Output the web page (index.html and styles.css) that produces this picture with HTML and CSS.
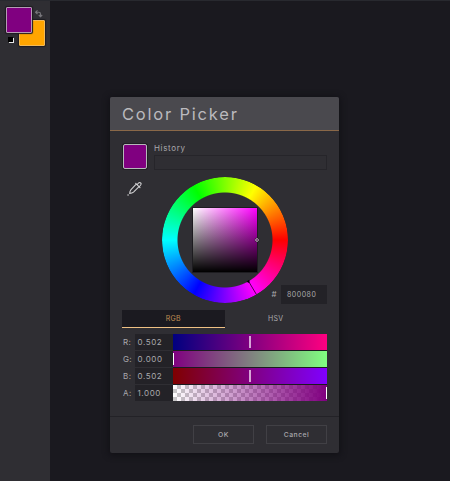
FILE: index.html
```html
<!DOCTYPE html>
<html lang="en">
<head>
<meta charset="utf-8">
<title>Color Picker</title>
<link rel="stylesheet" href="styles.css">
</head>
<body>
<div class="app">
  <aside class="toolbar">
    <div class="swatches">
      <div class="back-color"></div>
      <div class="fore-color"></div>
      <svg class="swap" width="8" height="8" viewBox="0 0 8 8"><path d="M2.5.4.5 2.2l2 1.8M.7 2.2h3.2Q5.5 2.2 5.5 4v2.5M3.8 5l1.7 1.8L7.2 5" /></svg>
      <div class="reset"><i></i></div>
    </div>
  </aside>
  <main class="workspace">
    <section class="dialog">
      <header class="title">Color Picker</header>
      <div class="content">
        <div class="top">
          <div class="current"></div>
          <div class="history">
            <div class="history-label">History</div>
            <div class="history-list"></div>
          </div>
        </div>
        <div class="picker">
          <svg class="dropper" width="16" height="16" viewBox="0 0 16 16">
            <path d="M9.2 3.2 4 8.6C3 9.8 2.7 11.2 2.7 12.4c1.2 0 2.7-.3 3.8-1.3l5.3-5.2M8.7 2.3l4.3 4.3M10.3 3.4l1.3-1.4c1.5-1.3 3.4.6 2.1 2L12.4 5.5" />
            <path class="tip" d="M1 14h.1" />
          </svg>
          <div class="wheel">
            <div class="ring"></div>
            <div class="field"></div>
            <svg class="marks" width="126" height="126" viewBox="0 0 126 126">
              <path class="hue" d="M86.5 104.2 94.3 117.3" />
              <path class="arrow" d="M84.8 104.6l2.4-1.4v2.6z" />
              <circle class="cursor-edge" cx="95" cy="63" r="1.8" />
              <circle class="cursor" cx="95" cy="63" r="1.4" />
            </svg>
          </div>
          <div class="hex"><span>#</span><div class="hex-value">800080</div></div>
        </div>
        <nav class="tabs"><div class="tab active">RGB</div><div class="tab">HSV</div></nav>
        <div class="channels">
          <div class="channel"><span class="name">R:</span><span class="value">0.502</span><div class="slider red"><i class="thumb middle"></i></div></div>
          <div class="channel"><span class="name">G:</span><span class="value">0.000</span><div class="slider green"><i class="thumb start"></i></div></div>
          <div class="channel"><span class="name">B:</span><span class="value">0.502</span><div class="slider blue"><i class="thumb middle"></i></div></div>
          <div class="channel"><span class="name">A:</span><span class="value">1.000</span><div class="slider alpha"><i class="thumb end"></i></div></div>
        </div>
      </div>
      <footer class="actions"><div class="button">OK</div><div class="button">Cancel</div></footer>
    </section>
  </main>
</div>
</body>
</html>
```
FILE: styles.css
```css
* { box-sizing: border-box; }
body { margin: 0; background: #1a191f; color: #aaa9ad; font: 8px Inter, "Liberation Sans", sans-serif; }
.app { display: flex; height: 481px; border-top: 1px solid #28292f; overflow: hidden; }
.toolbar { width: 50px; background: #2f2e33; padding: 6px 0 0 6px; }
.swatches { position: relative; width: 41px; height: 41px; }
.fore-color, .back-color { position: absolute; width: 26px; height: 26px; border: 1px solid #aaa; border-radius: 1px; box-shadow: 0 0 1px 1px #1d1c20; }
.fore-color { left: 0; top: 0; background: purple; border-color: #b59bb5; }
.back-color { left: 13px; top: 13px; background: #ffa500; border-color: #f2b958; }
.swap { position: absolute; left: 29px; top: 3px; fill: none; stroke: #77767b; stroke-width: 1.1; }
.reset { position: absolute; left: 3px; top: 31px; width: 5px; height: 5px; background: #e8e8e8; }
.reset i { position: absolute; left: -1px; top: -1px; width: 5px; height: 5px; background: #000; }
.workspace { flex: 1; padding: 96px 0 0 60px; }
.dialog { width: 229px; height: 356px; display: flex; flex-direction: column; background: #2f2e33; border-radius: 2px; box-shadow: 0 1px 6px 1px #111015; overflow: hidden; }
.title { height: 34px; padding-left: 12px; line-height: 35px; background: #4a494e; border-bottom: 1px solid #8a6848; color: #bbbabe; font-size: 16.5px; letter-spacing: 1.8px; white-space: nowrap; }
.content { height: 285px; padding: 13px 12px 0; }
.top { display: flex; height: 33px; }
.current { width: 24px; height: 25px; margin-left: 1px; border: 1px solid #b8b7bb; border-radius: 2px; background: purple; box-shadow: 0 0 0 1px #202024; }
.history { flex: 1; margin-left: 7px; }
.history-label { height: 11px; line-height: 8px; letter-spacing: .65px; font-size: 8px; }
.history-list { height: 15px; border: 1px solid #26252a; }
.picker { display: flex; height: 133px; }
.dropper { margin: 4px 19px 0 5px; fill: none; stroke: #d0d0d2; stroke-width: 1.1; stroke-linejoin: round; stroke-linecap: round; }
.dropper .tip { stroke-width: 1.4; }
.wheel { display: grid; width: 126px; height: 126px; place-items: center; flex: none; margin-left: -.4px; }
.wheel > * { grid-area: 1 / 1; }
.ring { width: 126px; height: 126px; border-radius: 50%; background: conic-gradient(from 90deg, #f00, #f0f, #00f, #0ff, #0f0, #ff0, #f00); -webkit-mask: radial-gradient(circle, transparent 47px, #000 48px); mask: radial-gradient(circle, transparent 47px, #000 48px); }
.field { width: 64px; height: 64px; background: linear-gradient(transparent, #000), linear-gradient(90deg, #fff, #f0f); box-shadow: 0 0 0 1px #1d1c20; }
.marks { position: relative; z-index: 1; fill: none; }
.marks .hue { stroke: #230020; stroke-width: .8; }
.marks .arrow { fill: #000; stroke: #000; stroke-width: .5; }
.cursor-edge { stroke: #111; stroke-width: 1; }
.cursor { stroke: #d9cad9; stroke-width: .8; }
.hex { display: flex; align-self: flex-start; margin: 108px 0 0 -16px; height: 19px; line-height: 19px; }
.hex span { width: 9.4px; font-size: 8px; }
.hex-value { width: 46px; background: #232227; padding-left: 6px; letter-spacing: .5px; font-size: 7px; line-height: 19px; }
.tabs { display: flex; height: 18px; }
.tab { flex: 1; text-align: center; line-height: 18px; font-size: 7px; letter-spacing: .3px; }
.tab.active { background: #1b1a20; color: #c08f53; border-bottom: 1px solid #efc184; }
.channels { display: grid; grid-template-rows: repeat(4, 16.2px); row-gap: .7px; margin-top: 6px; }
.channel { display: grid; grid-template-columns: 12.5px 38px 1fr; line-height: 16px; letter-spacing: .4px; font-size: 8px; }
.name { padding-left: 1px; }
.value { background: #232227; padding-left: 3px; letter-spacing: .6px; }
.slider { display: flex; align-items: center; box-shadow: 0 1px #1b1a1f; }
.red { background: linear-gradient(90deg, #000080, #ff0080); }
.green { background: linear-gradient(90deg, #800080, #80ff80); }
.blue { background: linear-gradient(90deg, #800000, #8000ff); }
.alpha { box-shadow: none; background: linear-gradient(90deg, #80008000, purple), repeating-conic-gradient(#c8c8c8 0 25%, #fff 0 50%) 0 0 / 8px 8px; }
.thumb { width: 2px; height: 12px; background: #d6a5d6; }
.middle { margin-left: 76px; }
.start { width: 1px; background: #fff; }
.end { width: 1px; margin-left: auto; background: #fff; }
.actions { flex: 1; border-top: 1px solid #232227; display: flex; justify-content: flex-end; gap: 12px; padding: 8px 12px 0; }
.button { width: 61px; height: 19px; border: 1px solid #414045; text-align: center; line-height: 18px; font-size: 6.8px; font-weight: 500; letter-spacing: .5px; }
```
